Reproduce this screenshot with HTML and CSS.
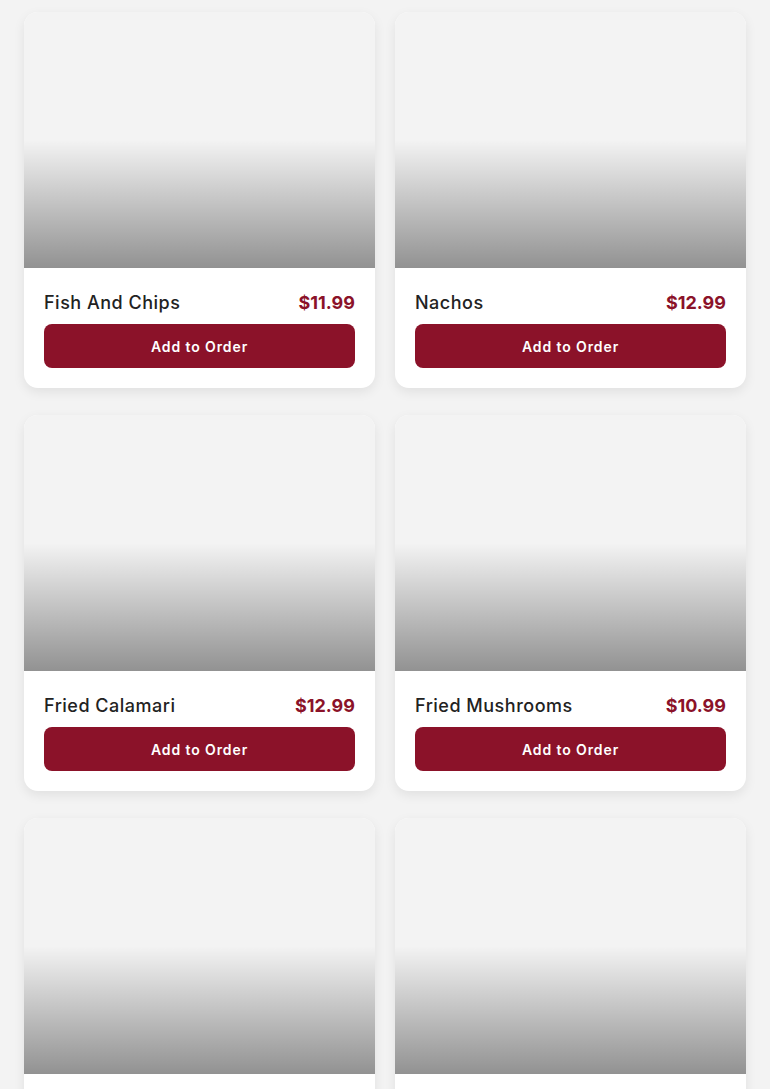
FILE: index.html
```html
<!DOCTYPE html>
<html lang="en">
<head>
    <meta charset="UTF-8">
    <meta name="viewport" content="width=device-width, initial-scale=1.0">
    <title>Menu</title>
    <link rel="stylesheet" href="styles.css">
</head>
<body>
    <div class="menu-grid">
        <!-- Row 1 -->
        <div class="card">
            <div class="card-image"></div>
            <div class="card-body">
                <div class="card-row">
                    <span class="item-name">Fish And Chips</span>
                    <span class="item-price">$11.99</span>
                </div>
                <button class="add-btn">Add to Order</button>
            </div>
        </div>
        <div class="card">
            <div class="card-image"></div>
            <div class="card-body">
                <div class="card-row">
                    <span class="item-name">Nachos</span>
                    <span class="item-price">$12.99</span>
                </div>
                <button class="add-btn">Add to Order</button>
            </div>
        </div>

        <!-- Row 2 -->
        <div class="card">
            <div class="card-image"></div>
            <div class="card-body">
                <div class="card-row">
                    <span class="item-name">Fried Calamari</span>
                    <span class="item-price">$12.99</span>
                </div>
                <button class="add-btn">Add to Order</button>
            </div>
        </div>
        <div class="card">
            <div class="card-image"></div>
            <div class="card-body">
                <div class="card-row">
                    <span class="item-name">Fried Mushrooms</span>
                    <span class="item-price">$10.99</span>
                </div>
                <button class="add-btn">Add to Order</button>
            </div>
        </div>

        <!-- Row 3 (below the fold) -->
        <div class="card">
            <div class="card-image"></div>
            <div class="card-body card-body-empty"></div>
        </div>
        <div class="card">
            <div class="card-image"></div>
            <div class="card-body card-body-empty"></div>
        </div>
    </div>
</body>
</html>
```

FILE: styles.css
```css
body {
    font-family: Inter, "Noto Sans", sans-serif;
    background-color: #f3f3f3;
    margin: 0;
    padding: 0;
}
.menu-grid {
    display: grid;
    grid-template-columns: 1fr 1fr;
    column-gap: 20px;
    row-gap: 27px;
    padding: 12px 24px 24px;
}

/* Card */
.card {
    background-color: white;
    border-radius: 14px;
    overflow: hidden;
    box-shadow: 0 4px 12px rgba(0, 0, 0, 0.08);
}
.card-image {
    height: 256px;
    background-color: #f3f3f3;
    background-image: linear-gradient(to bottom, rgba(0, 0, 0, 0) 50%, rgba(0, 0, 0, 0.4) 100%);
}
.card-body {
    padding: 20px;
}
.card-body-empty {
    height: 80px;
}
.card-row {
    display: flex;
    justify-content: space-between;
    align-items: center;
    height: 28px;
    margin-bottom: 8px;
}
.item-name {
    font-size: 18px;
    font-weight: 500;
    letter-spacing: 0.5px;
    color: #222;
}
.item-price {
    font-size: 18px;
    font-weight: 700;
    color: #8b1229;
}
.add-btn {
    display: block;
    width: 100%;
    height: 44px;
    background-color: #8b1229;
    color: white;
    border: none;
    border-radius: 8px;
    font-family: inherit;
    font-size: 14px;
    font-weight: 600;
    letter-spacing: 0.9px;
    cursor: pointer;
}
```
